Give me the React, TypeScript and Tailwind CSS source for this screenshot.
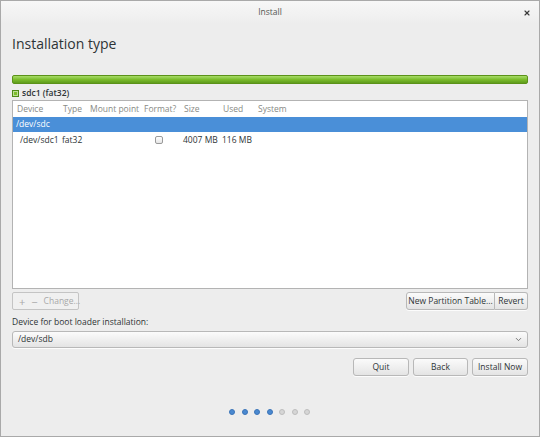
import { ChevronDown, X } from 'lucide-react'

const font = { fontFamily: '"Open Sans", "Noto Sans", sans-serif' }

const headers = ['Device', 'Type', 'Mount point', 'Format?', 'Size', 'Used', 'System']
const cols = 'grid grid-cols-[46px_27px_54px_40px_39px_35px_1fr]'
const btnBase =
  'flex items-center whitespace-nowrap rounded-[3px] border border-[#b8b8b8] bg-gradient-to-b from-[#fbfbfb] to-[#e4e4e4] text-[8.5px] leading-none text-[#2e3436] shadow-[0_1px_0_rgba(255,255,255,0.8)]'
const btn = `${btnBase} justify-center`

export default function App() {
  const steps = [true, true, true, true, false, false, false]

  return (
    <div
      style={font}
      className="flex h-[437px] w-[540px] flex-col overflow-hidden border border-[#a9a9a9] bg-[#ededed] text-[#2e3436]"
    >
      {/* barre de titre */}
      <div className="relative flex h-[23px] shrink-0 items-center justify-center bg-gradient-to-b from-[#f7f7f7] to-[#ededed]">
        <span className="text-[8.5px] leading-none text-[#555753]">Install</span>
        <X className="absolute right-[8px] top-[8px] h-[8px] w-[8px] text-[#3a3a3a]" strokeWidth={3.5} />
      </div>

      <div className="flex flex-1 flex-col px-[11px]">
        <h1 className="mt-[10px] h-[19px] text-[14px] leading-[19px] text-[#2e3436]">Installation type</h1>

        {/* barre de partition */}
        <div className="mt-[22px] h-[9px] rounded-[2px] border border-[#5b9219] bg-gradient-to-b from-[#a8dc66] via-[#7cbd2c] to-[#5f9c1c]" />

        <div className="mt-[4px] flex h-[10px] items-center gap-[3px]">
          <span className="h-[7px] w-[7px] border border-[#4f8a16] bg-[#7cbd2c] shadow-[inset_0_0_0_1px_rgba(255,255,255,0.5)]" />
          <span className="text-[8.5px] font-semibold leading-[10px] text-[#2e3436]">sdc1 (fat32)</span>
        </div>

        {/* tableau des partitions */}
        <div className="mt-[2px] h-[189px] border border-[#b3b3b3] bg-white">
          <div className={`${cols} h-[16px] items-center whitespace-nowrap text-[8.5px] leading-none text-[#888a85]`}>
            {headers.map((h) => (
              <span key={h} className="pl-[4px]">
                {h}
              </span>
            ))}
          </div>
          <div className="flex h-[15px] items-center bg-[#4a8fd8] pl-[3px] text-[8.5px] leading-none text-white">
            /dev/sdc
          </div>
          <div className={`${cols} h-[16px] items-center whitespace-nowrap text-[8.5px] leading-none text-[#2e3436]`}>
            <span className="pl-[7px]">/dev/sdc1</span>
            <span className="pl-[3px]">fat32</span>
            <span />
            <span className="pl-[15px]">
              <span className="block h-[8px] w-[8px] rounded-[2px] border border-[#9a9a9a] bg-gradient-to-b from-white to-[#e6e6e6]" />
            </span>
            <span className="pl-[3px]">4007 MB</span>
            <span className="pl-[3px]">116 MB</span>
            <span />
          </div>
        </div>

        {/* actions */}
        <div className="mt-[3px] flex h-[18px] items-stretch justify-between">
          <div className="flex w-[67px] items-center gap-[6px] whitespace-nowrap rounded-[2px] border border-[#c4c4c4] bg-[#f0f0f0] pl-[6px] text-[8.5px] leading-none text-[#a8a8a8]">
            <span className="text-[11px] leading-none">+</span>
            <span className="text-[11px] leading-none">−</span>
            <span>Change...</span>
          </div>
          <div className="flex">
            <div className={`${btn} w-[89px] rounded-r-none`}>New Partition Table...</div>
            <div className={`${btn} w-[33px] rounded-l-none border-l-0`}>Revert</div>
          </div>
        </div>

        <div className="mt-[6px] h-[11px] whitespace-nowrap text-[8.5px] leading-[11px] text-[#2e3436]">
          Device for boot loader installation:
        </div>

        <div className={`${btnBase} mt-[4px] h-[17px] justify-between px-[4px]`}>
          <span className="pl-[1px]">/dev/sdb</span>
          <ChevronDown className="h-[9px] w-[9px] text-[#555]" strokeWidth={2} />
        </div>

        <div className="mt-[10px] flex h-[18px] justify-end gap-[4px]">
          <div className={`${btn} w-[56px]`}>Quit</div>
          <div className={`${btn} w-[55px]`}>Back</div>
          <div className={`${btn} w-[56px]`}>Install Now</div>
        </div>

        {/* progression */}
        <div className="mt-[33px] flex justify-center gap-[6.5px] pr-[1px]">
          {steps.map((done, i) => (
            <span
              key={i}
              className={
                done
                  ? 'h-[6px] w-[6px] rounded-full border border-[#3b74b8] bg-[#4a89d0]'
                  : 'h-[6px] w-[6px] rounded-full border border-[#bdbdbd] bg-[#d6d6d6]'
              }
            />
          ))}
        </div>
      </div>
    </div>
  )
}
